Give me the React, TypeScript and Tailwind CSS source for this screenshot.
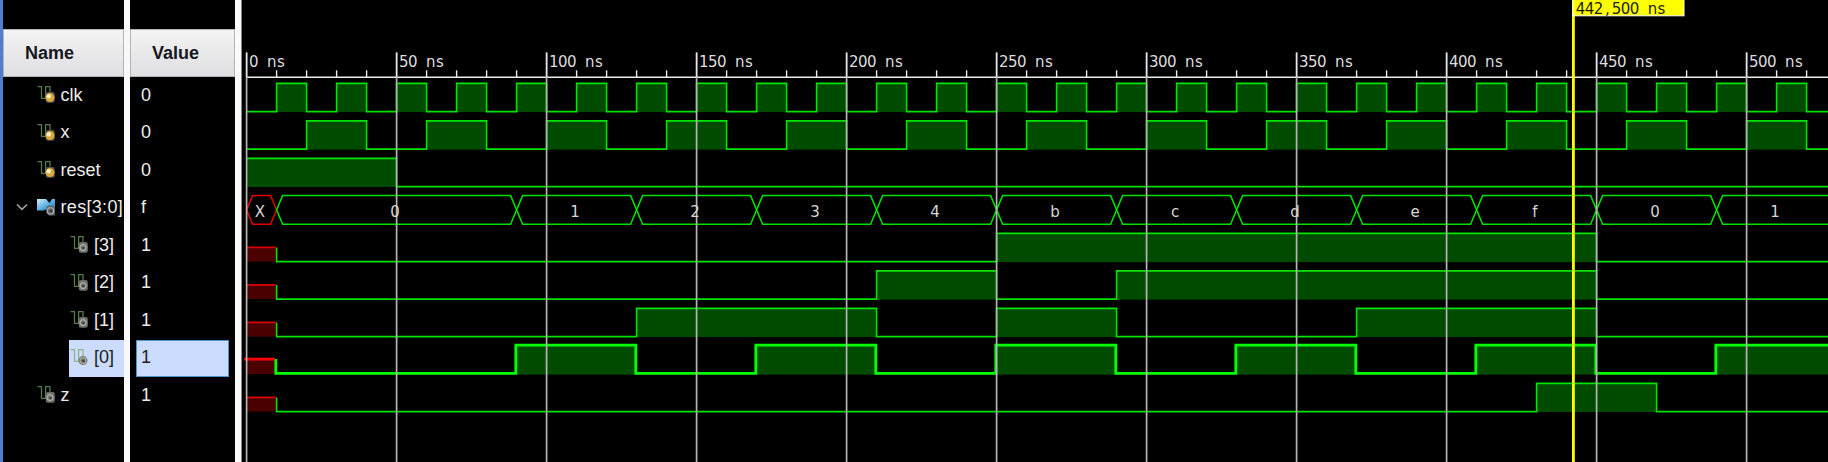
import React from "react";

type Level = 0 | 1;
type Edge = [number, Level];
type Signal = { name: string; value: string; kind: "bit" | "bus"; depth: 0 | 1; probe: "gold" | "gray"; selected?: boolean; edges?: Edge[]; unknownUntil?: number };

const END = 530;
const clock: Edge[] = Array.from({ length: 53 }, (_, i) => [i * 10, (i % 2) as Level]);
const xEdges: Edge[] = [[0, 0]];
for (let t = 20; t < END; t += 40) xEdges.push([t, 1], [t + 20, 0]);

const signals: Signal[] = [
  { name: "clk", value: "0", kind: "bit", depth: 0, probe: "gold", edges: clock },
  { name: "x", value: "0", kind: "bit", depth: 0, probe: "gold", edges: xEdges },
  { name: "reset", value: "0", kind: "bit", depth: 0, probe: "gold", edges: [[0, 1], [50, 0]] },
  { name: "res[3:0]", value: "f", kind: "bus", depth: 0, probe: "gray" },
  { name: "[3]", value: "1", kind: "bit", depth: 1, probe: "gray", unknownUntil: 10, edges: [[10, 0], [250, 1], [450, 0]] },
  { name: "[2]", value: "1", kind: "bit", depth: 1, probe: "gray", unknownUntil: 10, edges: [[10, 0], [210, 1], [250, 0], [290, 1], [450, 0]] },
  { name: "[1]", value: "1", kind: "bit", depth: 1, probe: "gray", unknownUntil: 10, edges: [[10, 0], [130, 1], [210, 0], [250, 1], [290, 0], [370, 1], [450, 0]] },
  { name: "[0]", value: "1", kind: "bit", depth: 1, probe: "gray", selected: true, unknownUntil: 10, edges: [[10, 0], [90, 1], [130, 0], [170, 1], [210, 0], [250, 1], [290, 0], [330, 1], [370, 0], [410, 1], [450, 0], [490, 1]] },
  { name: "z", value: "1", kind: "bit", depth: 0, probe: "gray", unknownUntil: 10, edges: [[10, 0], [430, 1], [470, 0]] },
];

const busValues: [number, number, string][] = [
  [0, 10, "X"], [10, 90, "0"], [90, 130, "1"], [130, 170, "2"], [170, 210, "3"], [210, 250, "4"],
  [250, 290, "b"], [290, 330, "c"], [330, 370, "d"], [370, 410, "e"], [410, 450, "f"], [450, 490, "0"], [490, 530, "1"],
];

const LEFT = 4.6;
const px = (t: number) => LEFT + t * 3;
const ROW = 37.5;

// Every character is centred in its own 9px cell; x is the centre of the first cell.
function MonoText({ x, y, text, fill }: { x: number; y: number; text: string; fill: string }) {
  return (
    <text x={Array.from(text, (_, i) => x + i * 9).join(" ")} y={y} fill={fill} textAnchor="middle" xmlSpace="preserve" className="font-['DejaVu_Sans',sans-serif] text-[15px]">
      {text}
    </text>
  );
}

function BitWave({ signal, index }: { signal: Signal; index: number }) {
  const hi = 83.4 + index * ROW;
  const lo = 111.6 + index * ROW;
  const edges = signal.edges ?? [];
  const unknown = signal.unknownUntil ?? 0;
  const thick = signal.selected;
  const o = thick ? -0.8 : 0;
  const y = (l: Level) => (l ? hi : lo) + o;
  let d = unknown ? `M${px(unknown) + o} ${hi + 14 + o}V${lo + o}` : `M${px(0)} ${y(edges[0][1])}`;
  edges.forEach(([t, l]) => { d += `H${px(t) + o}V${y(l)}`; });
  d += `H${px(END)}`;
  return (
    <g>
      {edges.map(([t, l], i) => l === 1 && (
        <rect key={t} x={px(t)} y={hi} width={((edges[i + 1]?.[0] ?? END) - t) * 3} height={lo - hi + 0.5} fill="#004b00" />
      ))}
      {unknown > 0 && <rect x={px(0)} y={hi + 14} width={unknown * 3} height={14.2} fill="#4b0000" />}
      <path d={d} fill="none" stroke={thick ? "#00ff00" : "#00e400"} strokeWidth={thick ? 2.8 : 1.6} />
      {unknown > 0 && <path d={`M${px(0) - (thick ? 2.5 : 0)} ${hi + 14 + o}H${px(unknown) - 1 + o}`} stroke={thick ? "#ff0000" : "#e00000"} strokeWidth={thick ? 2.8 : 1.7} />}
    </g>
  );
}

function BusWave() {
  const top = 195.6, bottom = 224.2, mid = 209.9;
  return (
    <g fill="none" strokeWidth="1.5">
      {busValues.map(([a, b]) => (
        <path key={a} stroke={a === 0 ? "#e00000" : "#00e000"}
          d={`M${px(a)} ${mid}L${px(a) + 6} ${top}H${px(b) - 6}L${px(b)} ${mid}L${px(b) - 6} ${bottom}H${px(a) + 6}Z`} />
      ))}
    </g>
  );
}

function Waveform() {
  return (
    <svg width="1586" height="462" viewBox="0 0 1586 462" className="block">
      {signals.map((s, i) => s.kind === "bus" ? <BusWave key={s.name} /> : <BitWave key={s.name} signal={s} index={i} />)}
      <path d="M4 77.3H1586" stroke="#ececec" strokeWidth="1.6" />
      {Array.from({ length: 53 }, (_, i) => i % 5 !== 0 && <path key={i} d={`M${px(i * 10)} 70.3V77`} stroke="#ececec" strokeWidth="1.4" />)}
      {Array.from({ length: 11 }, (_, i) => (
        <g key={i}>
          <path d={`M${px(i * 50)} 52.5V462`} stroke="#b4b4b4" strokeWidth="1.7" />
          <path d={`M${px(i * 50)} 52.5V77`} stroke="#e6e6e6" strokeWidth="1.4" />
          <MonoText x={px(i * 50) + 7.2} y={67.3} text={`${i * 50} ns`} fill="#dedede" />
        </g>
      ))}
      {busValues.map(([a, b, v]) => <MonoText key={a} x={(px(a) + px(b)) / 2 - 1.6} y={217.2} text={v} fill="#d6d6d6" />)}
      <path d="M1331.4 0V462" stroke="#ffff00" strokeWidth="2.8" />
      <rect x="1331" y="-1" width="111" height="16.8" fill="#ffff00" stroke="#ffffff" strokeWidth="1" />
      <MonoText x={1338.5} y={14.4} text="442,500 ns" fill="#202000" />
    </svg>
  );
}

function Probe({ gold, faint }: { gold: boolean; faint?: boolean }) {
  return (
    <svg width="19" height="19" viewBox="0 0 19 19" className="shrink-0">
      <path d="M0.5 1.7H4.5V13.3H9M8.6 13V1.7H13V8" fill="none" stroke={faint ? "#8fb58c" : "#55794b"} strokeWidth="1.3" />
      {!faint && <rect x="8.8" y="7" width="9" height="10.8" rx="2" fill={gold ? "#55534c" : "#6c6c6a"} />}
      <circle cx="13" cy="12.6" r="4.5" fill={gold ? "#dba83c" : "#777773"} />
      {gold ? <circle cx="11.8" cy="11.2" r="2.2" fill="#fff1b8" /> : (
        <>
          <circle cx="13" cy="12.6" r="3" fill="none" stroke="#b8b8b4" />
          <circle cx="13.5" cy="13" r="1.2" fill="#3c3c3a" />
        </>
      )}
    </svg>
  );
}

function BusIcon() {
  return (
    <svg width="19" height="19" viewBox="0 0 19 19" className="shrink-0">
      <defs>
        <linearGradient id="bus" x2="1" y2="1"><stop stopColor="#d3effd" /><stop offset="0.6" stopColor="#4ba6df" /><stop offset="1" stopColor="#2683c2" /></linearGradient>
      </defs>
      <path d="M0 1H9L12.5 5L15 1H18V12.5H12L8 11.5L7 12.5H0Z" fill="url(#bus)" />
      <path d="M9.5 8.5L12 7.5H16L18 9V17.5H12L9.5 15Z" fill="#5f6468" />
      <circle cx="13.5" cy="12.8" r="3.2" fill="none" stroke="#a5a5a3" strokeWidth="1.3" />
      <circle cx="13.9" cy="13" r="1.2" fill="#333" />
    </svg>
  );
}

function NameRow({ signal }: { signal: Signal }) {
  const bus = signal.kind === "bus";
  return (
    <div className="flex h-[37.5px]">
      {bus
        ? <div className="flex w-[33.5px] shrink-0 items-center pb-[2px] pl-[13px]"><svg width="12" height="8" viewBox="0 0 12 8"><path d="M1 1.5L6 6.3L11 1.5" fill="none" stroke="#a0a0a0" strokeWidth="1.7" /></svg></div>
        : <div className={signal.depth ? "w-[65.5px] shrink-0" : "w-[33.5px] shrink-0"} />}
      <div className={signal.selected ? "flex min-w-0 flex-1 items-center bg-[#cbdcff] pb-[2px] pl-[1.5px] text-[#202020]" : signal.depth ? "flex min-w-0 flex-1 items-center pb-[2px] pl-[1.5px] text-[#ececec]" : "flex min-w-0 flex-1 items-center pb-[2px] text-[#ececec]"}>
        {bus ? <BusIcon /> : <Probe gold={signal.probe === "gold"} faint={signal.selected} />}
        <span className={bus ? "pl-[5px] tracking-[0.32px] whitespace-nowrap" : "pl-[5px] whitespace-nowrap"}>{signal.name}</span>
      </div>
    </div>
  );
}

const header = "flex h-12 items-center border border-[#b4b4b4] bg-linear-to-b from-[#f3f3f3] to-[#dfdfe1] pb-px font-bold text-[#17171f]";

export default function App() {
  return (
    <main className="flex h-[462px] w-[1828px] overflow-hidden bg-black font-['Liberation_Sans',sans-serif] text-[18px] leading-none">
      <div className="w-[3px] shrink-0 bg-[#4c7fd0]" />
      <section className="w-[121px] shrink-0 overflow-hidden pt-[29px]">
        <div className={`${header} pl-[21px]`}>Name</div>
        {signals.map((s) => <NameRow key={s.name} signal={s} />)}
      </section>
      <div className="w-[6px] shrink-0 bg-[#f8f8fc]" />
      <section className="w-[105px] shrink-0 pt-[29px]">
        <div className={`${header} pl-[21px]`}>Value</div>
        {signals.map((s) => (
          <div key={s.name} className="flex h-[37.5px] px-[6px]">
            <div className={s.selected ? "flex flex-1 items-center border border-[#4b93c8] bg-[#cbdcff] pb-[2px] pl-[4px] text-[#202020]" : "flex flex-1 items-center pb-[2px] pl-[5px] text-[#ececec]"}>{s.value}</div>
          </div>
        ))}
      </section>
      <div className="w-[7px] shrink-0 border-r border-[#888] bg-[#fafafa]" />
      <section className="w-[1586px] shrink-0"><Waveform /></section>
    </main>
  );
}
